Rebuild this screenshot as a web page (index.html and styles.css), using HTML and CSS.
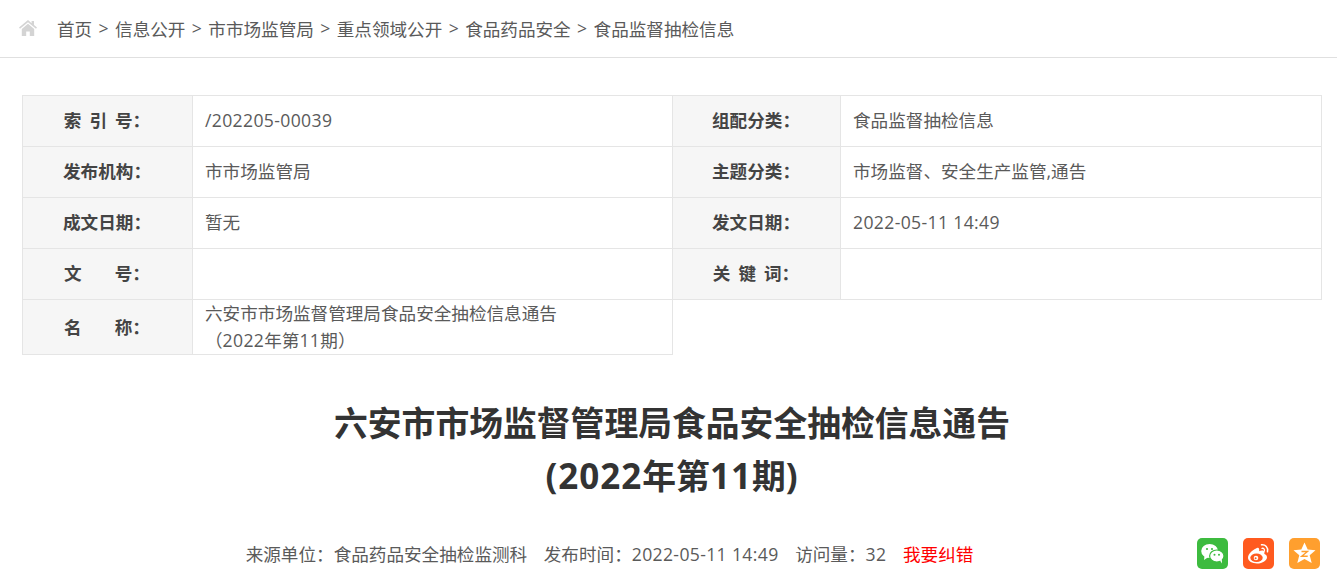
FILE: index.html
```html
<!DOCTYPE html>
<html lang="zh-CN">
<head>
    <meta charset="UTF-8">
    <title>六安市市场监督管理局食品安全抽检信息通告(2022年第11期)</title>
    <link rel="stylesheet" href="styles.css">
</head>
<body>
    <!-- Breadcrumb -->
    <div class="crumbs">
        <svg class="home-icon" viewBox="0 0 18 16" width="18" height="16">
            <path fill="#d4d4d4" d="M9 0 0 7.600l1 1.200L9 2.200l8 6.600 1-1.200-3-2.500V1h-2.400v2.300z"/>
            <path fill="#d4d4d4" d="M9 3.700 2.800 8.900V16h4.400v-4.600h3.600V16h4.400V8.900z"/>
        </svg>
        <a href="#">首页</a><span class="sep">&gt;</span>
        <a href="#">信息公开</a><span class="sep">&gt;</span>
        <a href="#">市市场监管局</a><span class="sep">&gt;</span>
        <a href="#">重点领域公开</a><span class="sep">&gt;</span>
        <a href="#">食品药品安全</a><span class="sep">&gt;</span>
        <a href="#">食品监督抽检信息</a>
    </div>

    <div class="content">
        <!-- Document info -->
        <table class="info-table">
            <colgroup>
                <col class="col-label-a">
                <col class="col-value-a">
                <col class="col-label-b">
                <col class="col-value-b">
            </colgroup>
            <tr>
                <th>索<span class="small-gap"></span>引<span class="small-gap"></span>号：</th>
                <td class="num">/202205-00039</td>
                <th>组配分类：</th>
                <td>食品监督抽检信息</td>
            </tr>
            <tr>
                <th>发布机构：</th>
                <td>市市场监管局</td>
                <th>主题分类：</th>
                <td>市场监督、安全生产监管,通告</td>
            </tr>
            <tr>
                <th>成文日期：</th>
                <td>暂无</td>
                <th>发文日期：</th>
                <td class="num">2022-05-11 14:49</td>
            </tr>
            <tr>
                <th>文<span class="wide-gap"></span>号：</th>
                <td></td>
                <th>关<span class="small-gap"></span>键<span class="small-gap"></span>词：</th>
                <td></td>
            </tr>
            <tr class="name-row">
                <th>名<span class="wide-gap"></span>称：</th>
                <td>六安市市场监督管理局食品安全抽检信息通告<br>（<span class="num">2022</span>年第<span class="num">11</span>期）</td>
            </tr>
        </table>

        <h1 class="title">六安市市场监督管理局食品安全抽检信息通告<br><span class="num">(2022</span>年第<span class="num">11</span>期<span class="num">)</span></h1>

        <div class="meta-row">
            <div class="meta">
                <span class="meta-item">来源单位：食品药品安全抽检监测科</span>
                <span class="meta-item">发布时间：<span class="num">2022-05-11 14:49</span></span>
                <span class="meta-item">访问量：<span class="num">32</span></span>
                <a href="#" class="report">我要纠错</a>
            </div>
            <div class="share">
                <a href="#" class="share-btn wechat">
                    <svg viewBox="0 0 31 31" width="31" height="31">
                        <ellipse cx="12.600" cy="13" rx="8.400" ry="7" fill="#fff"/>
                        <path fill="#fff" d="M7.500 17.500 7 22l4.500-3z"/>
                        <ellipse cx="19.800" cy="18" rx="7.200" ry="6" fill="#fff" stroke="#3dbb3f" stroke-width="1.200"/>
                        <path fill="#fff" d="M23 22.500l2 3-.2-4.500z"/>
                        <circle cx="10" cy="11" r="1.100" fill="#3dbb3f"/>
                        <circle cx="15" cy="11" r="1.100" fill="#3dbb3f"/>
                        <circle cx="17.500" cy="16.800" r="1" fill="#3dbb3f"/>
                        <circle cx="22" cy="16.800" r="1" fill="#3dbb3f"/>
                    </svg>
                </a>
                <a href="#" class="share-btn weibo">
                    <svg viewBox="0 0 31 31" width="31" height="31">
                        <path fill="#fff" d="M13 10.500c-4 1.800-8 5.700-8 9.300 0 3.400 4.300 5.700 9 5.700 5.800 0 10-3.300 10-6.300 0-2-1.800-2.800-2.800-3.100.5-1.300.5-2.500-.4-3.100-1.300-.9-3.500-.2-4.700.3.300-1.500.1-2.700-.6-3.200-.6-.4-1.600-.3-2.500.4z"/>
                        <ellipse cx="13.500" cy="19.800" rx="6.200" ry="4.300" fill="#ff5a1f"/>
                        <circle cx="13" cy="20" r="2.300" fill="#fff"/>
                        <circle cx="12.600" cy="20.300" r="1" fill="#ff5a1f"/>
                        <path fill="none" stroke="#fff" stroke-width="1.500" stroke-linecap="round" d="M18.500 6.800c3.800-.5 7 2.600 6 7"/>
                        <path fill="none" stroke="#fff" stroke-width="1.300" stroke-linecap="round" d="M19 10.300c1.700-.3 2.800 1 2.400 2.700"/>
                    </svg>
                </a>
                <a href="#" class="share-btn qzone">
                    <svg viewBox="0 0 31 31" width="31" height="31">
                        <path fill="#fff" d="M15.500 4.500l3.200 7 7.800.7-5.800 5 2 7.800-7.200-4-7.200 4 2-7.800-5.800-5 7.800-.7z"/>
                        <path fill="none" stroke="#ff9f2e" stroke-width="1.400" d="M12.500 13.500h6l-5.800 4.800h6"/>
                    </svg>
                </a>
            </div>
        </div>
    </div>
</body>
</html>
```

FILE: styles.css
```css
body {
    font-family: 'Open Sans', 'Noto Sans CJK SC', sans-serif;
    font-size: 17.6px;
    color: #5a5a5a;
    background-color: #fff;
    margin: 0;
    padding: 0;
}
a {
    color: inherit;
    text-decoration: none;
}
.crumbs {
    display: flex;
    align-items: center;
    height: 58px;
    box-sizing: border-box;
    padding: 0 0 1px 19px;
    border-bottom: 1px solid #e0e0e0;
}
.home-icon {
    margin-right: 20px;
}
.sep {
    margin: 0 6.4px;
}
.num {
    letter-spacing: 0.35px;
}
.content {
    padding: 37px 15px 0 22px;
}
.info-table {
    width: 1300px;
    table-layout: fixed;
    border-collapse: collapse;
}
.col-label-a {
    width: 170px;
}
.col-value-a {
    width: 480px;
}
.col-label-b {
    width: 168px;
}
.info-table th, .info-table td {
    height: 48px;
    padding: 0 12px 2px;
    border: 1px solid #e5e5e5;
    line-height: 27px;
}
.info-table th {
    padding: 0 1px 2px 0;
    background-color: #f6f6f6;
    color: #444;
    text-align: center;
    font-weight: bold;
}
.info-table td {
    text-align: left;
}
.name-row th, .name-row td {
    height: 54px;
    padding-bottom: 0;
}
.small-gap {
    display: inline-block;
    width: 8px;
}
.wide-gap {
    display: inline-block;
    width: 33px;
}
.title {
    margin: 42px 0 0;
    font-size: 33.8px;
    line-height: 53px;
    font-weight: bold;
    color: #333;
    text-align: center;
}
.title .num {
    font-size: 35px;
    line-height: 1;
    letter-spacing: 1px;
}
.meta-row {
    display: flex;
    align-items: center;
    margin-top: 35px;
    padding-right: 2px;
}
.meta {
    flex: 1;
    text-align: center;
}
.meta-item {
    margin-right: 12px;
}
.report {
    color: #f00;
}
.share {
    display: flex;
    gap: 15px;
}
.share-btn {
    display: block;
    width: 31px;
    height: 31px;
    border-radius: 5px;
}
.wechat {
    background-color: #3dbb3f;
}
.weibo {
    background-color: #ff5a1f;
}
.qzone {
    background-color: #ff9f2e;
}
```
